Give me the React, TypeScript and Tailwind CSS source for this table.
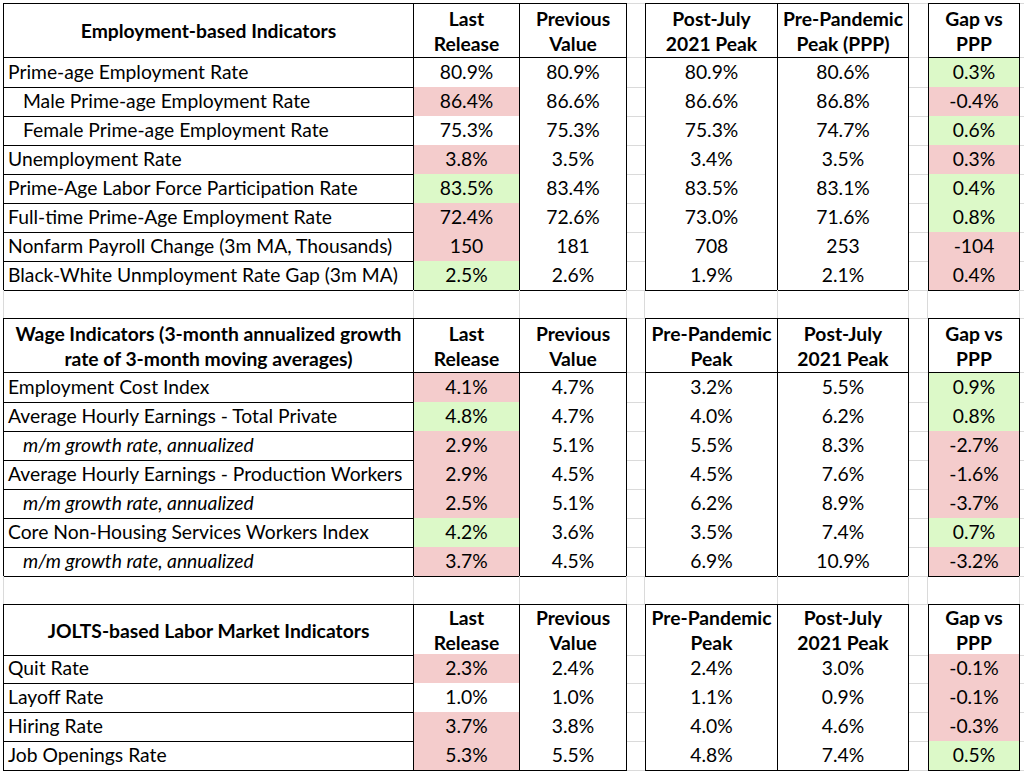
import React from 'react';

type Tone = '' | 'r' | 'g';
type Val = [string, Tone?];

interface DataRow {
  label: string;
  indent?: boolean;
  italic?: boolean;
  vals: Val[];
}

interface Section {
  title: React.ReactNode;
  heads: React.ReactNode[];
  headH: string;
  rows: DataRow[];
}

const grid = 'grid grid-cols-[411px_106px_107px_18px_133px_131px_19px_92px_1fr]';
const black = 'border-black';
const gray = 'border-[#dadada]';

const toneBg: Record<string, string> = {
  '': 'bg-white',
  r: 'bg-[#f4cccc]',
  g: 'bg-[#dcf9c8]',
};

const sections: Section[] = [
  {
    title: 'Employment-based Indicators',
    heads: [
      <>Last<br />Release</>,
      <>Previous<br />Value</>,
      <>Post-July<br />2021 Peak</>,
      <>Pre-Pandemic<br />Peak (PPP)</>,
      <>Gap vs<br />PPP</>,
    ],
    headH: 'h-[55px]',
    rows: [
      { label: 'Prime-age Employment Rate', vals: [['80.9%'], ['80.9%'], ['80.9%'], ['80.6%'], ['0.3%', 'g']] },
      { label: 'Male Prime-age Employment Rate', indent: true, vals: [['86.4%', 'r'], ['86.6%'], ['86.6%'], ['86.8%'], ['-0.4%', 'r']] },
      { label: 'Female Prime-age Employment Rate', indent: true, vals: [['75.3%'], ['75.3%'], ['75.3%'], ['74.7%'], ['0.6%', 'g']] },
      { label: 'Unemployment Rate', vals: [['3.8%', 'r'], ['3.5%'], ['3.4%'], ['3.5%'], ['0.3%', 'r']] },
      { label: 'Prime-Age Labor Force Participation Rate', vals: [['83.5%', 'g'], ['83.4%'], ['83.5%'], ['83.1%'], ['0.4%', 'g']] },
      { label: 'Full-time Prime-Age Employment Rate', vals: [['72.4%', 'r'], ['72.6%'], ['73.0%'], ['71.6%'], ['0.8%', 'g']] },
      { label: 'Nonfarm Payroll Change (3m MA, Thousands)', vals: [['150', 'r'], ['181'], ['708'], ['253'], ['-104', 'r']] },
      { label: 'Black-White Unmployment Rate Gap (3m MA)', vals: [['2.5%', 'g'], ['2.6%'], ['1.9%'], ['2.1%'], ['0.4%', 'r']] },
    ],
  },
  {
    title: <>Wage Indicators (3-month annualized growth<br />rate of 3-month moving averages)</>,
    heads: [
      <>Last<br />Release</>,
      <>Previous<br />Value</>,
      <>Pre-Pandemic<br />Peak</>,
      <>Post-July<br />2021 Peak</>,
      <>Gap vs<br />PPP</>,
    ],
    headH: 'h-[55px]',
    rows: [
      { label: 'Employment Cost Index', vals: [['4.1%', 'r'], ['4.7%'], ['3.2%'], ['5.5%'], ['0.9%', 'g']] },
      { label: 'Average Hourly Earnings - Total Private', vals: [['4.8%', 'g'], ['4.7%'], ['4.0%'], ['6.2%'], ['0.8%', 'g']] },
      { label: 'm/m growth rate, annualized', indent: true, italic: true, vals: [['2.9%', 'r'], ['5.1%'], ['5.5%'], ['8.3%'], ['-2.7%', 'r']] },
      { label: 'Average Hourly Earnings - Production Workers', vals: [['2.9%', 'r'], ['4.5%'], ['4.5%'], ['7.6%'], ['-1.6%', 'r']] },
      { label: 'm/m growth rate, annualized', indent: true, italic: true, vals: [['2.5%', 'r'], ['5.1%'], ['6.2%'], ['8.9%'], ['-3.7%', 'r']] },
      { label: 'Core Non-Housing Services Workers Index', vals: [['4.2%', 'g'], ['3.6%'], ['3.5%'], ['7.4%'], ['0.7%', 'g']] },
      { label: 'm/m growth rate, annualized', indent: true, italic: true, vals: [['3.7%', 'r'], ['4.5%'], ['6.9%'], ['10.9%'], ['-3.2%', 'r']] },
    ],
  },
  {
    title: 'JOLTS-based Labor Market Indicators',
    heads: [
      <>Last<br />Release</>,
      <>Previous<br />Value</>,
      <>Pre-Pandemic<br />Peak</>,
      <>Post-July<br />2021 Peak</>,
      <>Gap vs<br />PPP</>,
    ],
    headH: 'h-[50px]',
    rows: [
      { label: 'Quit Rate', vals: [['2.3%', 'r'], ['2.4%'], ['2.4%'], ['3.0%'], ['-0.1%', 'r']] },
      { label: 'Layoff Rate', vals: [['1.0%'], ['1.0%'], ['1.1%'], ['0.9%'], ['-0.1%', 'r']] },
      { label: 'Hiring Rate', vals: [['3.7%', 'r'], ['3.8%'], ['4.0%'], ['4.6%'], ['-0.3%', 'r']] },
      { label: 'Job Openings Rate', vals: [['5.3%', 'r'], ['5.5%'], ['4.8%'], ['7.4%'], ['0.5%', 'g']] },
    ],
  },
];

// value columns: B, C, E, F, H -> which of them open a bordered block
const opensBlock = [false, false, true, false, true];

function HeaderRow({ s }: { s: Section }) {
  const cell = `flex items-center justify-center text-center font-bold leading-[25px] border-t border-r border-b ${black}`;
  return (
    <div className={`${grid} ${s.headH}`}>
      <div className={`${cell} border-l whitespace-nowrap`}>{s.title}</div>
      <div className={cell}>{s.heads[0]}</div>
      <div className={cell}>{s.heads[1]}</div>
      <div className={`border-t border-b ${gray}`} />
      <div className={`${cell} border-l`}>{s.heads[2]}</div>
      <div className={cell}>{s.heads[3]}</div>
      <div className={`border-t border-b ${gray}`} />
      <div className={`${cell} border-l`}>{s.heads[4]}</div>
      <div className={`border-t border-b ${gray}`} />
    </div>
  );
}

function ValueCell({ v, first }: { v: Val; first: boolean }) {
  return (
    <div
      className={`flex items-center justify-center border-r border-b ${black} ${first ? 'border-l' : ''} ${toneBg[v[1] ?? '']}`}
    >
      {v[0]}
    </div>
  );
}

function BodyRow({ r }: { r: DataRow }) {
  const [b, c, e, f, h] = r.vals;
  return (
    <div className={`${grid} h-[29px]`}>
      <div
        className={`flex items-center whitespace-nowrap border-l border-r border-b ${black} ${r.indent ? 'pl-[19px]' : 'pl-[4px]'} ${r.italic ? 'italic' : ''}`}
      >
        {r.label}
      </div>
      <ValueCell v={b} first={opensBlock[0]} />
      <ValueCell v={c} first={opensBlock[1]} />
      <div className={`border-b ${gray}`} />
      <ValueCell v={e} first={opensBlock[2]} />
      <ValueCell v={f} first={opensBlock[3]} />
      <div className={`border-b ${gray}`} />
      <ValueCell v={h} first={opensBlock[4]} />
      <div className={`border-b ${gray}`} />
    </div>
  );
}

function GapRow() {
  return (
    <div className={`${grid} h-[28px]`}>
      <div className={`border-l border-r ${gray}`} />
      <div className={`border-r ${gray}`} />
      <div className={`border-r ${gray}`} />
      <div className={`border-r ${gray}`} />
      <div className={`border-r ${gray}`} />
      <div className={`border-r ${gray}`} />
      <div className={`border-r ${gray}`} />
      <div className={`border-r ${gray}`} />
      <div />
    </div>
  );
}

export default function App() {
  return (
    <div className="w-[1024px] h-[772px] overflow-hidden bg-white pl-[3px] pt-[3px] text-[19.3px] text-black font-['Lato',_'Open_Sans',_sans-serif]">
      {sections.map((s, i) => (
        <div key={i}>
          {i > 0 && <GapRow />}
          <HeaderRow s={s} />
          {s.rows.map((r, j) => (
            <BodyRow key={j} r={r} />
          ))}
        </div>
      ))}
    </div>
  );
}
